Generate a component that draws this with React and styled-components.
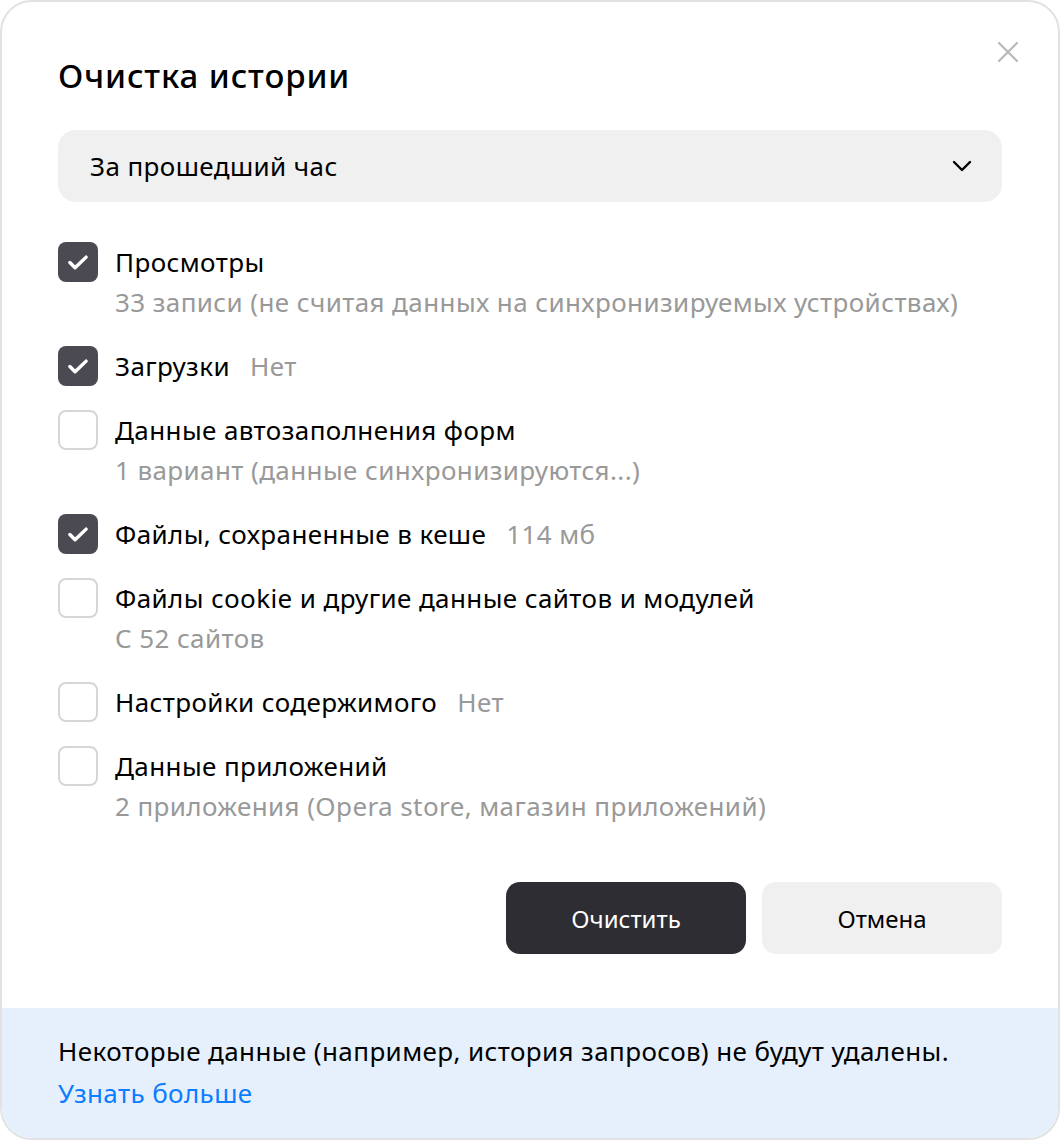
import React from "react";
import styled, { createGlobalStyle } from "styled-components";

const Global = createGlobalStyle`
  html, body {
    margin: 0;
    padding: 0;
    background: #ffffff;
  }
  body {
    font-family: "Noto Sans", "Liberation Sans", sans-serif;
    color: #000;
  }
  * { box-sizing: border-box; }
`;

const Dialog = styled.div`
  position: relative;
  width: 1060px;
  height: 1140px;
  border: 2px solid #e2e2e2;
  border-radius: 32px;
  background: #fff;
  overflow: hidden;
  display: flex;
  flex-direction: column;
`;

const Body = styled.div`
  flex: 1;
  padding: 54px 56px 0 56px;
  display: flex;
  flex-direction: column;
`;

const Title = styled.h1`
  margin: 0;
  font-size: 33px;
  font-weight: 500;
  line-height: 40px;
  letter-spacing: 0.9px;
`;

const Close = styled.button`
  position: absolute;
  top: 38px;
  right: 38px;
  width: 24px;
  height: 24px;
  padding: 0;
  border: none;
  background: none;
  display: flex;
  align-items: center;
  justify-content: center;
`;

const Select = styled.div`
  margin-top: 34px;
  height: 72px;
  border-radius: 18px;
  background: #f0f0f0;
  display: flex;
  align-items: center;
  justify-content: space-between;
  padding: 0 28px 0 32px;
  font-size: 26px;
  letter-spacing: 0.4px;
`;

const List = styled.div`
  margin-top: 40px;
  display: flex;
  flex-direction: column;
  gap: 24px;
`;

const Row = styled.div`
  display: flex;
  gap: 17px;
`;

const Box = styled.div`
  flex: none;
  width: 40px;
  height: 40px;
  border-radius: 8px;
  display: flex;
  align-items: center;
  justify-content: center;
  background: ${(p) => (p.checked ? "#4b4a53" : "#fff")};
  border: ${(p) => (p.checked ? "none" : "2px solid #d6d6d6")};
`;

const Text = styled.div`
  display: flex;
  flex-direction: column;
  font-size: 26px;
  line-height: 40px;
  letter-spacing: 0.4px;
`;

const Label = styled.div`
  color: #000;
  display: flex;
  gap: 20px;
`;

const Muted = styled.span`
  color: #999;
`;

const Sub = styled.div`
  color: #999;
`;

const Actions = styled.div`
  margin-top: 56px;
  display: flex;
  justify-content: flex-end;
  gap: 16px;
`;

const Button = styled.button`
  width: 240px;
  height: 72px;
  border: none;
  border-radius: 14px;
  font-family: inherit;
  font-size: 24px;
  background: ${(p) => (p.primary ? "#2e2d33" : "#f0f0f0")};
  color: ${(p) => (p.primary ? "#fff" : "#000")};
`;

const Footer = styled.div`
  background: #e6f0fd;
  padding: 22px 56px 24px;
  font-size: 26px;
  line-height: 42px;
  letter-spacing: 0.4px;
`;

const Link = styled.a`
  display: block;
  color: #0b7dff;
  text-decoration: none;
`;

const Check = () => (
  <svg width="26" height="26" viewBox="0 0 24 24" fill="none">
    <path d="M4.5 12.5l4.8 4.8L19.5 7.5" stroke="#fff" strokeWidth="3.2" strokeLinecap="round" strokeLinejoin="round" />
  </svg>
);

const items = [
  { label: "Просмотры", sub: "33 записи (не считая данных на синхронизируемых устройствах)", checked: true },
  { label: "Загрузки", note: "Нет", checked: true },
  { label: "Данные автозаполнения форм", sub: "1 вариант (данные синхронизируются...)" },
  { label: "Файлы, сохраненные в кеше", note: "114 мб", checked: true },
  { label: "Файлы cookie и другие данные сайтов и модулей", sub: "С 52 сайтов" },
  { label: "Настройки содержимого", note: "Нет" },
  { label: "Данные приложений", sub: "2 приложения (Opera store, магазин приложений)" },
];

export default function App() {
  return (
    <>
      <Global />
      <Dialog>
        <Close aria-label="Закрыть">
          <svg width="22" height="22" viewBox="0 0 22 22">
            <path d="M2 2l18 18M20 2L2 20" stroke="#b8b8b8" strokeWidth="2.2" strokeLinecap="round" />
          </svg>
        </Close>
        <Body>
          <Title>Очистка истории</Title>
          <Select>
            <span>За прошедший час</span>
            <svg width="24" height="24" viewBox="0 0 24 24" fill="none">
              <path d="M4 8l8 8 8-8" stroke="#000" strokeWidth="2.4" strokeLinecap="round" strokeLinejoin="round" />
            </svg>
          </Select>
          <List>
            {items.map((it) => (
              <Row key={it.label}>
                <Box checked={it.checked}>{it.checked && <Check />}</Box>
                <Text>
                  <Label>
                    <span>{it.label}</span>
                    {it.note && <Muted>{it.note}</Muted>}
                  </Label>
                  {it.sub && <Sub>{it.sub}</Sub>}
                </Text>
              </Row>
            ))}
          </List>
          <Actions>
            <Button primary>Очистить</Button>
            <Button>Отмена</Button>
          </Actions>
        </Body>
        <Footer>
          <div>Некоторые данные (например, история запросов) не будут удалены.</div>
          <Link href="#">Узнать больше</Link>
        </Footer>
      </Dialog>
    </>
  );
}
